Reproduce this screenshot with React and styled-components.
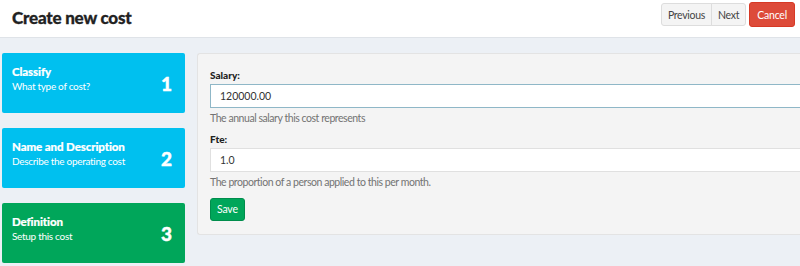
import React from 'react';
import styled, { createGlobalStyle } from 'styled-components';

const GlobalStyle = createGlobalStyle`
    html, body {
        margin: 0;
        padding: 0;
        background: #ecf0f5;
        font-family: Lato, "Open Sans", sans-serif;
        color: #333;
    }
`;

const Page = styled.div`
    width: 800px;
    height: 266px;
    overflow: hidden;
    background: #ecf0f5;
`;

const Header = styled.div`
    display: flex;
    align-items: flex-start;
    justify-content: space-between;
    height: 38px;
    padding: 2px 5px 0 12px;
    box-sizing: border-box;
    background: #fff;
    border-bottom: 1px solid #dfe3e8;
`;

const Title = styled.h1`
    margin: 5px 0 0;
    font-size: 17px;
    line-height: 22px;
    font-weight: 900;
    color: #222;
    letter-spacing: -0.2px;
    -webkit-text-stroke: 0.3px #222;
`;

const ButtonGroup = styled.div`
    display: flex;
    align-items: flex-start;
`;

const NavButton = styled.button`
    height: 23px;
    margin-top: 1px;
    padding: 0 ${p => p.$first ? '6px' : '6px'};
    font-family: inherit;
    font-size: 10.5px;
    letter-spacing: -0.3px;
    color: #444;
    background: #f4f4f4;
    border: 1px solid #ddd;
    margin-left: -1px;
    border-radius: ${p => p.$first ? '3px 0 0 3px' : p.$last ? '0 3px 3px 0' : '0'};
`;

const CancelButton = styled.button`
    height: 25px;
    margin-left: 3px;
    padding: 0 7px;
    font-family: inherit;
    font-size: 10.5px;
    letter-spacing: -0.2px;
    color: #fff;
    background: #dd4b39;
    border: 1px solid #d73925;
    border-radius: 3px;
`;

const Content = styled.div`
    display: flex;
    align-items: flex-start;
    gap: 12px;
    padding: 15px 0 0 2px;
`;

const Steps = styled.div`
    display: flex;
    flex-direction: column;
    gap: 15px;
    width: 183px;
    flex-shrink: 0;
`;

const Step = styled.div`
    display: flex;
    align-items: center;
    justify-content: space-between;
    height: 60px;
    padding: 0 13px 0 10px;
    box-sizing: border-box;
    border-radius: 2px;
    color: #fff;
    background: ${p => p.$active ? '#00a65a' : '#00c0ef'};
`;

const StepText = styled.div`
    display: flex;
    flex-direction: column;
    gap: 2px;
    padding-bottom: 9px;
`;

const StepTitle = styled.div`
    font-size: 11.5px;
    line-height: 13px;
    font-weight: 900;
    letter-spacing: -0.1px;
    -webkit-text-stroke: 0.2px #fff;
`;

const StepSub = styled.div`
    font-size: 10px;
    line-height: 12px;
    letter-spacing: -0.3px;
`;

const StepNumber = styled.div`
    font-size: 19px;
    font-weight: 900;
    -webkit-text-stroke: 0.4px #fff;
`;

const Panel = styled.div`
    flex: 1;
    height: 182px;
    box-sizing: border-box;
    padding: 15px 0 0 12px;
    background: #f4f4f4;
    border: 1px solid #e3e3e3;
    border-right: none;
    border-radius: 3px 0 0 3px;
`;

const Field = styled.div`
    display: flex;
    flex-direction: column;
`;

const Label = styled.label`
    font-size: 10px;
    line-height: 12px;
    font-weight: 900;
    color: #222;
    margin-bottom: 3px;
`;

const Input = styled.input`
    height: 24px;
    box-sizing: border-box;
    padding: 0 9px;
    font-family: inherit;
    font-size: 10.5px;
    color: #333;
    background: #fff;
    border: 1px solid ${p => p.$focus ? '#8fb7c7' : '#e0e0e0'};
    border-right: none;
    outline: none;
`;

const Help = styled.div`
    font-size: 10.5px;
    line-height: 12px;
    letter-spacing: -0.45px;
    color: #737373;
    margin: 4px 0 9px;
`;

const SaveButton = styled.button`
    align-self: flex-start;
    height: 23px;
    padding: 0 6px;
    margin-top: 0;
    font-family: inherit;
    font-size: 10.5px;
    letter-spacing: -0.2px;
    color: #fff;
    background: #00a65a;
    border: 1px solid #008d4c;
    border-radius: 3px;
`;

const steps = [
    { title: 'Classify', sub: 'What type of cost?', n: 1 },
    { title: 'Name and Description', sub: 'Describe the operating cost', n: 2 },
    { title: 'Definition', sub: 'Setup this cost', n: 3, active: true },
];

export default function App() {
    return (
        <Page>
            <GlobalStyle />
            <Header>
                <Title>Create new cost</Title>
                <ButtonGroup>
                    <NavButton $first>Previous</NavButton>
                    <NavButton $last>Next</NavButton>
                    <CancelButton>Cancel</CancelButton>
                </ButtonGroup>
            </Header>
            <Content>
                <Steps>
                    {steps.map(s => (
                        <Step key={s.n} $active={s.active}>
                            <StepText>
                                <StepTitle>{s.title}</StepTitle>
                                <StepSub>{s.sub}</StepSub>
                            </StepText>
                            <StepNumber>{s.n}</StepNumber>
                        </Step>
                    ))}
                </Steps>
                <Panel>
                    <Field>
                        <Label>Salary:</Label>
                        <Input $focus defaultValue="120000.00" />
                        <Help>The annual salary this cost represents</Help>
                    </Field>
                    <Field>
                        <Label>Fte:</Label>
                        <Input defaultValue="1.0" />
                        <Help>The proportion of a person applied to this per month.</Help>
                    </Field>
                    <SaveButton>Save</SaveButton>
                </Panel>
            </Content>
        </Page>
    );
}
